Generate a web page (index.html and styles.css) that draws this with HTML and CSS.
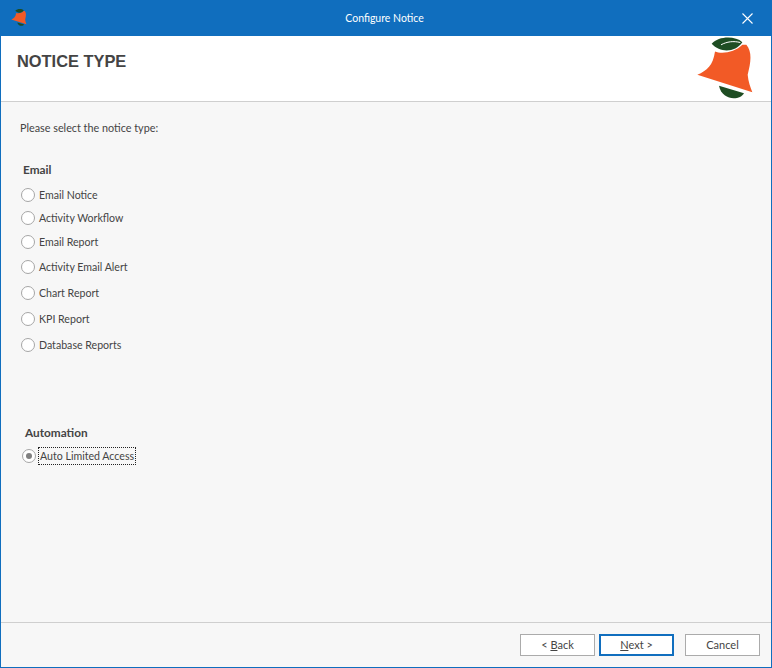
FILE: index.html
```html
<!DOCTYPE html>
<html lang="en">
<head>
<meta charset="utf-8">
<title>Configure Notice</title>
<link rel="stylesheet" href="styles.css">
</head>
<body>
<div class="window">
  <div class="titlebar">
    <svg class="app-icon" viewBox="20 10 180 185" aria-hidden="true">
      <path class="leaf" d="M64 30C85 6 135 6 156 25C135 56 90 58 64 30Z"/>
      <path class="bell" d="M21 123C50 110 68 95 74 53C95 62 135 55 156 33L168 33C186 55 182 85 172 123C174 145 180 160 186 175Z"/>
      <path class="leaf" d="M86 156L161 178C150 200 95 202 86 156Z"/>
    </svg>
    <span class="title">Configure Notice</span>
    <svg class="close" viewBox="0 0 11 11" aria-hidden="true"><path d="M.5.5l10 10M10.5.5l-10 10"/></svg>
  </div>
  <header class="banner">
    <h1 class="heading">NOTICE TYPE</h1>
    <svg class="logo" viewBox="20 10 180 185" aria-hidden="true">
      <path class="leaf" d="M64 30C85 6 135 6 156 25C135 56 90 58 64 30Z"/>
      <path class="vein" d="M92 33C110 23 130 21 150 26"/>
      <path class="bell" d="M21 123C50 110 68 95 74 53C95 62 135 55 156 33L168 33C186 55 182 85 172 123C174 145 180 160 186 175Z"/>
      <path class="leaf" d="M86 156L161 178C150 200 95 202 86 156Z"/>
    </svg>
  </header>
  <main class="content">
    <p class="prompt">Please select the notice type:</p>
    <h2 class="group group-email">Email</h2>
    <ul class="options">
      <li class="option"><span class="radio"></span><span class="label">Email Notice</span></li>
      <li class="option gap-23"><span class="radio"></span><span class="label">Activity Workflow</span></li>
      <li class="option gap-24"><span class="radio"></span><span class="label">Email Report</span></li>
      <li class="option gap-25"><span class="radio"></span><span class="label">Activity Email Alert</span></li>
      <li class="option gap-26"><span class="radio"></span><span class="label">Chart Report</span></li>
      <li class="option gap-26"><span class="radio"></span><span class="label">KPI Report</span></li>
      <li class="option gap-26"><span class="radio"></span><span class="label">Database Reports</span></li>
    </ul>
    <h2 class="group group-auto">Automation</h2>
    <ul class="options">
      <li class="option"><span class="radio checked"></span><span class="label focused">Auto Limited Access</span></li>
    </ul>
  </main>
  <footer class="footer">
    <button class="btn" type="button">&lt; <u>B</u>ack</button>
    <button class="btn primary" type="button"><u>N</u>ext &gt;</button>
    <button class="btn cancel" type="button">Cancel</button>
  </footer>
</div>
</body>
</html>
```
FILE: styles.css
```css
* { box-sizing: border-box; }
html, body { margin: 0; padding: 0; }
body { width: 772px; height: 668px; overflow: hidden; font-family: Lato, Roboto, sans-serif; font-size: 11px; color: #444; }
.window { width: 772px; height: 668px; display: flex; flex-direction: column; background: #f7f7f7; border: 1px solid #106ebe; border-top: 0; }
.titlebar { height: 36px; flex: none; background: #106ebe; display: flex; align-items: center; position: relative; justify-content: center; margin: 0 -1px; padding: 0 3px 1px 0; }
.app-icon { position: absolute; left: 11px; top: 9px; width: 17px; height: 17px; }
.title { color: #fff; font-size: 10.5px; }
.close { position: absolute; left: 742px; top: 13px; width: 11px; height: 11px; }
.close path { stroke: #fff; stroke-width: 1.1; fill: none; }
.banner { height: 66px; flex: none; background: #fff; border-bottom: 1px solid #cfcfcf; display: flex; justify-content: space-between; align-items: flex-start; padding: 16px 14px 0 16px; }
.heading { margin: 0; font-family: "Liberation Sans", Arial, sans-serif; font-size: 16.4px; font-weight: 700; line-height: 18px; color: #444; }
.logo { width: 60px; height: 62px; margin-top: -15px; }
.leaf { fill: #1e4d23; }
.vein { fill: none; stroke: #fff; stroke-width: 3; }
.bell { fill: #f25a26; }
.content { flex: 1; padding: 0 0 0 20px; }
.prompt { margin: 18px 0 0 -1px; line-height: 16px; font-size: 10.8px; }
.group { margin: 0; font-size: 11.8px; font-weight: 700; line-height: 16px; color: #444; }
.group-email { margin-top: 26px; margin-left: 2px; }
.group-auto { margin-top: 72px; margin-left: 4px; }
.options { list-style: none; margin: 0; padding: 0; }
.group-email + .options { margin-top: 9px; }
.group-auto + .options { margin-top: 7px; margin-left: 1px; }
.option { display: flex; align-items: center; height: 16px; }
.gap-23 { margin-top: 7px; }
.gap-24 { margin-top: 8px; }
.gap-25 { margin-top: 9px; }
.gap-26 { margin-top: 10px; }
.radio { width: 14px; height: 14px; flex: none; border: 1px solid #a6a6a6; border-radius: 50%; background: #fff; margin-right: 3px; position: relative; }
.radio.checked::after { content: ""; position: absolute; left: 3px; top: 3px; width: 6px; height: 6px; border-radius: 50%; background: #808080; }
.label { padding: 0 1px; line-height: 16px; font-size: 10.6px; }
.focused { outline: 1px dotted #222; outline-offset: 0; }
.footer { height: 45px; flex: none; border-top: 1px solid #cfcfcf; display: flex; align-items: flex-start; justify-content: flex-end; padding: 11px 11px 0 0; }
.btn { width: 75px; height: 22px; padding: 0 0 1px; font: inherit; color: #444; background: #fff; border: 1px solid #ababab; border-radius: 0; }
.btn.primary { margin-left: 4px; border: 2px solid #106ebe; }
.btn.cancel { margin-left: 11px; }
```
